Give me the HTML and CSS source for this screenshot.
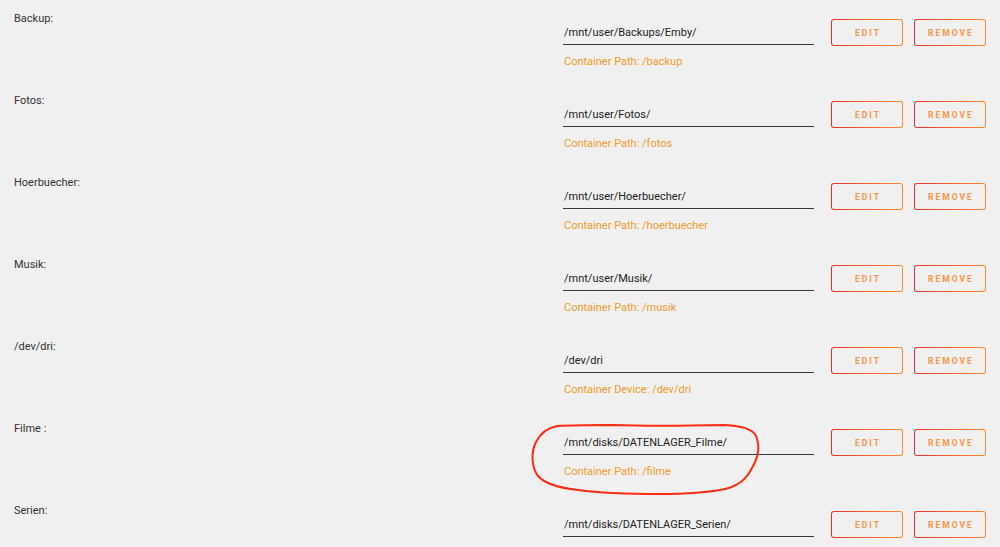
FILE: index.html
```html
<html>
<head>
	<meta charset="utf-8" />
	<title>docker paths</title>
	<link rel="stylesheet" href="styles.css">
</head>

<body>
	<div id="paths">
		<div class="path-row">
			<span class="path-label">Backup:</span>
			<div class="path-value">
				<div class="path-input">/mnt/user/Backups/Emby/</div>
				<div class="path-target">Container Path: /backup</div>
			</div>
			<button class="btn btn-edit">EDIT</button>
			<button class="btn">REMOVE</button>
		</div>
		<div class="path-row">
			<span class="path-label">Fotos:</span>
			<div class="path-value">
				<div class="path-input">/mnt/user/Fotos/</div>
				<div class="path-target">Container Path: /fotos</div>
			</div>
			<button class="btn btn-edit">EDIT</button>
			<button class="btn">REMOVE</button>
		</div>
		<div class="path-row">
			<span class="path-label">Hoerbuecher:</span>
			<div class="path-value">
				<div class="path-input">/mnt/user/Hoerbuecher/</div>
				<div class="path-target">Container Path: /hoerbuecher</div>
			</div>
			<button class="btn btn-edit">EDIT</button>
			<button class="btn">REMOVE</button>
		</div>
		<div class="path-row">
			<span class="path-label">Musik:</span>
			<div class="path-value">
				<div class="path-input">/mnt/user/Musik/</div>
				<div class="path-target">Container Path: /musik</div>
			</div>
			<button class="btn btn-edit">EDIT</button>
			<button class="btn">REMOVE</button>
		</div>
		<div class="path-row">
			<span class="path-label">/dev/dri:</span>
			<div class="path-value">
				<div class="path-input">/dev/dri</div>
				<div class="path-target">Container Device: /dev/dri</div>
			</div>
			<button class="btn btn-edit">EDIT</button>
			<button class="btn">REMOVE</button>
		</div>
		<div class="path-row">
			<span class="path-label">Filme :</span>
			<div class="path-value">
				<div class="path-input">/mnt/disks/DATENLAGER_Filme/</div>
				<div class="path-target">Container Path: /filme</div>
			</div>
			<button class="btn btn-edit">EDIT</button>
			<button class="btn">REMOVE</button>
		</div>
		<div class="path-row">
			<span class="path-label">Serien:</span>
			<div class="path-value">
				<div class="path-input">/mnt/disks/DATENLAGER_Serien/</div>
			</div>
			<button class="btn btn-edit">EDIT</button>
			<button class="btn">REMOVE</button>
		</div>
	</div>

	<!-- hand drawn marker around the Filme path -->
	<svg class="marker" width="1000" height="547" viewBox="0 0 1000 547">
		<path d="M557 426 C575 425 590 425 610 425 C640 426 680 426 725 425 C740 426 752 428 756 436 C760 446 758 458 752 468 C746 480 738 486 725 489 C705 493 685 494 660 494 C635 494 600 493 578 490 C560 488 545 484 538 476 C531 466 531 452 536 442 C540 434 547 428 557 426 Z" />
	</svg>
</body>
</html>
```

FILE: styles.css
```css
:root {
	--label-color: #333333;
	--value-color: #222222;
	--target-color: #ee9b2a;
	--btn-red: #e5302c;
	--btn-orange: #ff8c2f;
}

body {
	margin: 0;
	background-color: #f0f0f0;
	font-family: "Roboto", "Noto Sans", sans-serif;
	font-size: 11px;
	overflow: hidden;
}

#paths {
	padding-top: 10px;
}

.path-row {
	display: flex;
	align-items: flex-start;
	height: 82px;
	padding-left: 14px;
}

.path-row:last-child {
	height: auto;
}

.path-label {
	width: 549px;
	margin-top: 1px;
	color: var(--label-color);
	line-height: 16px;
}

.path-value {
	width: 251px;
}

.path-input {
	margin-top: 11px;
	height: 23px;
	line-height: 23px;
	padding-left: 1px;
	color: var(--value-color);
	border-bottom: 1px solid #3a3a3a;
}

.path-target {
	margin-top: 9px;
	line-height: 16px;
	padding-left: 1px;
	color: var(--target-color);
}

.btn {
	width: 72px;
	margin-top: 9px;
	margin-left: 11px;
	height: 27px;
	padding: 0;
	border: 1px solid transparent;
	border-radius: 3px;
	background:
		linear-gradient(#f0f0f0, #f0f0f0) padding-box,
		linear-gradient(90deg, var(--btn-red), var(--btn-orange)) border-box;
	color: #fb9447;
	font-family: "Roboto", sans-serif;
	font-size: 8.5px;
	font-weight: bold;
	letter-spacing: 2px;
	text-indent: 2px;
}

.btn-edit {
	margin-left: 17px;
}

.marker {
	position: absolute;
	top: 0;
	left: 0;
	pointer-events: none;
}

.marker path {
	fill: none;
	stroke: #ff2a12;
	stroke-width: 2;
	stroke-linejoin: round;
}
```
